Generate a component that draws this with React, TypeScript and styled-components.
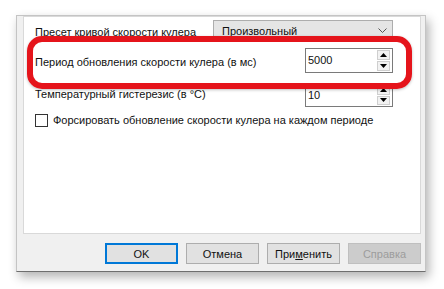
import React from 'react';
import styled, { createGlobalStyle } from 'styled-components';

const GlobalStyle = createGlobalStyle`
  html, body {
    margin: 0;
    background: #ffffff;
  }
  body {
    font-family: "Liberation Sans", Arial, sans-serif;
    font-size: 11px;
    color: #111;
  }
`;

const Stage = styled.div`
  position: relative;
  width: 444px;
  height: 289px;
  box-sizing: border-box;
  padding: 15px 0 0 16px;
  overflow: hidden;
`;

const Window = styled.div`
  width: 410px;
  height: 257px;
  box-sizing: border-box;
  background: #f0f0f0;
  border: 1px solid #c4c4c4;
  border-bottom-color: #6e6e6e;
  box-shadow: 3px 5px 10px rgba(0, 0, 0, 0.3);
  padding: 0 4px 0 6px;
  display: flex;
  flex-direction: column;
`;

const Panel = styled.div`
  height: 218px;
  box-sizing: border-box;
  background: #ffffff;
  border: 1px solid #d9d9d9;
  padding: 3px 27px 0 11px;
  display: flex;
  flex-direction: column;
`;

const Row = styled.div<{ $h: number; $gap?: number }>`
  display: flex;
  align-items: center;
  justify-content: space-between;
  height: ${({ $h }) => $h}px;
  margin-top: ${({ $gap = 0 }) => $gap}px;
`;

const Label = styled.span<{ $dy?: number }>`
  white-space: nowrap;
  margin-top: ${({ $dy = 2 }) => $dy}px;
`;

const ComboBox = styled.div`
  width: 180px;
  height: 21px;
  box-sizing: border-box;
  background: #e5e5e5;
  border: 1px solid #adadad;
  display: flex;
  align-items: center;
  justify-content: space-between;
  padding: 0 5px 0 8px;
`;

const SpinBox = styled.div<{ $h: number }>`
  width: 88px;
  height: ${({ $h }) => $h}px;
  box-sizing: border-box;
  background: #fff;
  border: 1px solid #7a7a7a;
  display: flex;
  justify-content: space-between;
  padding: 1px 2px 1px 2px;
`;

const SpinValue = styled.span`
  padding-top: 2px;
  line-height: 16px;
`;

const SpinButtons = styled.div`
  display: flex;
  flex-direction: column;
  gap: 1px;
  width: 13px;
`;

const SpinButton = styled.div`
  flex: 1;
  box-sizing: border-box;
  background: #f2f2f2;
  border: 1px solid #cfcfcf;
  display: flex;
  align-items: center;
  justify-content: center;
`;

const CheckRow = styled.label`
  display: flex;
  align-items: center;
  gap: 5px;
  height: 14px;
  margin-top: 6px;
  white-space: nowrap;
`;

const CheckBox = styled.span`
  width: 13px;
  height: 13px;
  box-sizing: border-box;
  border: 1px solid #333;
  background: #fff;
  flex-shrink: 0;
`;

const ButtonBar = styled.div`
  display: flex;
  justify-content: flex-end;
  gap: 8px;
  margin-top: 9px;
`;

const Button = styled.div<{ $primary?: boolean; $disabled?: boolean }>`
  width: 73px;
  height: 21px;
  box-sizing: border-box;
  display: flex;
  align-items: center;
  justify-content: center;
  background: ${({ $disabled }) => ($disabled ? '#cccccc' : '#e1e1e1')};
  color: ${({ $disabled }) => ($disabled ? '#9c9c9c' : '#111')};
  border: ${({ $primary, $disabled }) =>
    $primary ? '2px solid #0078d7' : $disabled ? '1px solid #bfbfbf' : '1px solid #adadad'};
`;

const Highlight = styled.div`
  position: absolute;
  left: 27px;
  top: 36px;
  width: 385px;
  height: 53px;
  box-sizing: border-box;
  border: 6px solid #e5141b;
  border-radius: 15px;
  box-shadow: 0 1px 3px rgba(0, 0, 0, 0.25);
`;

function Arrow({ up }: { up?: boolean }) {
  return (
    <svg width="7" height="4" viewBox="0 0 7 4">
      <path d={up ? 'M0 4 L3.5 0 L7 4 Z' : 'M0 0 L3.5 4 L7 0 Z'} fill="#000" />
    </svg>
  );
}

function Spin({ value, h }: { value: string; h: number }) {
  return (
    <SpinBox $h={h}>
      <SpinValue>{value}</SpinValue>
      <SpinButtons>
        <SpinButton><Arrow up /></SpinButton>
        <SpinButton><Arrow /></SpinButton>
      </SpinButtons>
    </SpinBox>
  );
}

export default function App() {
  return (
    <>
      <GlobalStyle />
      <Stage>
        <Window>
          <Panel>
            <Row $h={21}>
              <Label>Пресет кривой скорости кулера</Label>
              <ComboBox>
                <span>Произвольный</span>
                <svg width="9" height="5" viewBox="0 0 9 5">
                  <path d="M0.5 0.5 L4.5 4.5 L8.5 0.5" fill="none" stroke="#555" strokeWidth="1" />
                </svg>
              </ComboBox>
            </Row>
            <Row $h={25} $gap={7}>
              <Label>Период обновления скорости кулера (в мс)</Label>
              <Spin value="5000" h={25} />
            </Row>
            <Row $h={24} $gap={10}>
              <Label $dy={-3}>Температурный гистерезис (в °С)</Label>
              <Spin value="10" h={24} />
            </Row>
            <CheckRow>
              <CheckBox />
              <span>Форсировать обновление скорости кулера на каждом периоде</span>
            </CheckRow>
          </Panel>
          <ButtonBar>
            <Button $primary>OK</Button>
            <Button>Отмена</Button>
            <Button>При<u>м</u>енить</Button>
            <Button $disabled>Справка</Button>
          </ButtonBar>
        </Window>
        <Highlight />
      </Stage>
    </>
  );
}
